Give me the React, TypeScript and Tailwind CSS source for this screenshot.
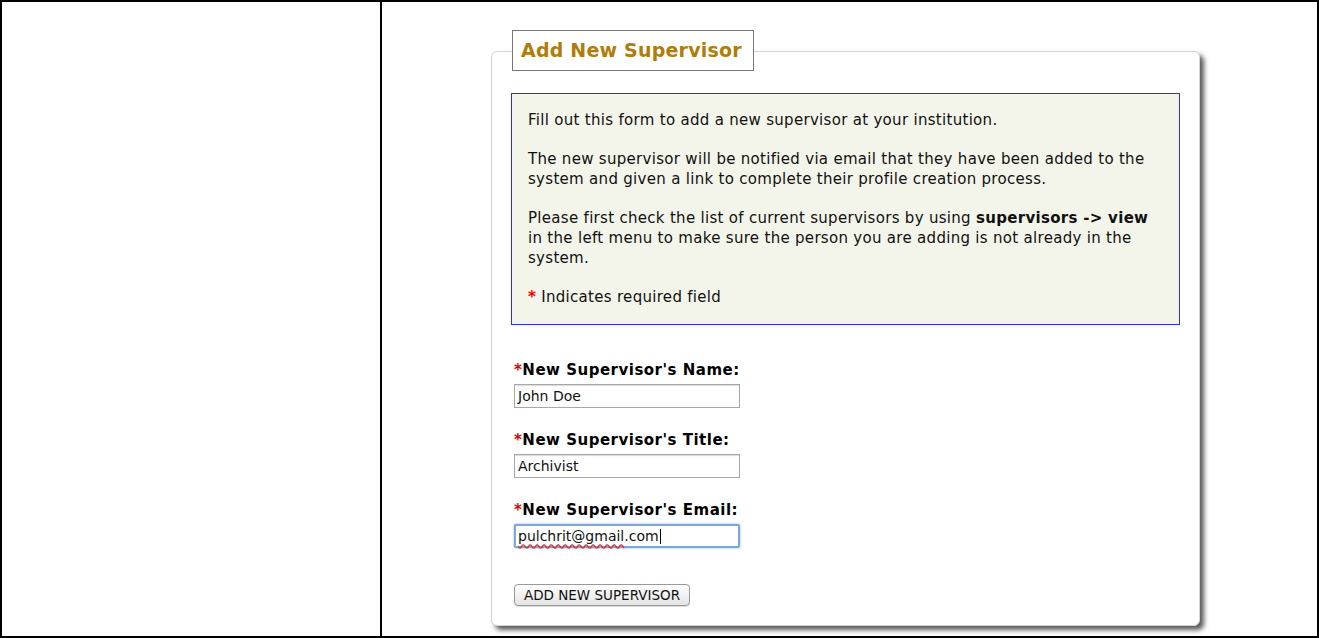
import React from "react";

const font = { fontFamily: '"DejaVu Sans", Verdana, sans-serif' };

function Field({ label, children, first }: { label: string; children: React.ReactNode; first?: boolean }) {
  return (
    <div className={first ? "mt-[36px]" : "mt-[23px]"}>
      <div className="text-[15px] leading-[18px] font-bold tracking-[0.5px] text-black whitespace-nowrap">
        <span className="text-[#e00000]">*</span>
        {label}
      </div>
      <div className="mt-[5px]">{children}</div>
    </div>
  );
}

export default function App() {
  return (
    <div className="w-[1319px] h-[638px] border-2 border-black flex bg-white" style={font}>
      <div className="w-[380px] border-r-2 border-black" />
      <div className="flex-1 pl-[109px] pt-[49px]">
        <div className="relative w-[709px] border border-[#d4d4d4] rounded-[6px] shadow-[4px_4px_5px_rgba(0,0,0,0.65)] bg-white px-[19px] pt-[41px] pb-[19px]">
          <div className="absolute left-[20px] -top-[22px] h-[41px] w-[242px] bg-white border border-[#777] flex items-center pl-[8px]">
            <span className="text-[19px] font-bold tracking-[0.2px] text-[#b07c0c] whitespace-nowrap">Add New Supervisor</span>
          </div>

          <div className="border border-[#2b2bff] bg-[#f4f5ea] pl-[16px] pr-[10px] pt-[16px] pb-[17px] text-[15px] leading-[20px] tracking-[0.3px] text-[#111]">
            <p className="whitespace-nowrap">Fill out this form to add a new supervisor at your institution.</p>
            <p className="mt-[19px] whitespace-nowrap">
              The new supervisor will be notified via email that they have been added to the
              <br />
              system and given a link to complete their profile creation process.
            </p>
            <p className="mt-[19px] whitespace-nowrap">
              Please first check the list of current supervisors by using <b>supervisors -&gt; view</b>
              <br />
              in the left menu to make sure the person you are adding is not already in the
              <br />
              system.
            </p>
            <p className="mt-[19px] whitespace-nowrap">
              <span className="text-[#f00000] font-bold">*</span> Indicates required field
            </p>
          </div>

          <div className="pl-[3px]">
            <Field label="New Supervisor's Name:" first>
              <div className="w-[226px] h-[24px] border border-[#a8a8a8] shadow-[inset_0_1px_1px_rgba(0,0,0,0.15)] bg-white flex items-center px-[3px] text-[14px] text-[#111]">
                John Doe
              </div>
            </Field>
            <Field label="New Supervisor's Title:">
              <div className="w-[226px] h-[24px] border border-[#a8a8a8] shadow-[inset_0_1px_1px_rgba(0,0,0,0.15)] bg-white flex items-center px-[3px] text-[14px] text-[#111]">
                Archivist
              </div>
            </Field>
            <Field label="New Supervisor's Email:">
              <div className="w-[226px] h-[24px] border-2 border-[#7fa7d8] rounded-[2px] shadow-[0_0_2px_rgba(80,130,200,0.8)] bg-white flex items-center px-[2px] text-[14px] text-[#111]">
                <span className="underline decoration-wavy decoration-[#e03030] underline-offset-[3px]">pulchrit@gmail</span>
                <span>.com</span>
                <span className="inline-block w-[1px] h-[15px] bg-black ml-[1px]" />
              </div>
            </Field>

            <button className="mt-[36px] h-[22px] w-[176px] rounded-[4px] border border-[#9a9a9a] bg-gradient-to-b from-white to-[#e4e4e4] text-[13.5px] text-[#111] flex items-center justify-center shadow-[0_1px_1px_rgba(0,0,0,0.15)]">
              ADD NEW SUPERVISOR
            </button>
          </div>
        </div>
      </div>
    </div>
  );
}
